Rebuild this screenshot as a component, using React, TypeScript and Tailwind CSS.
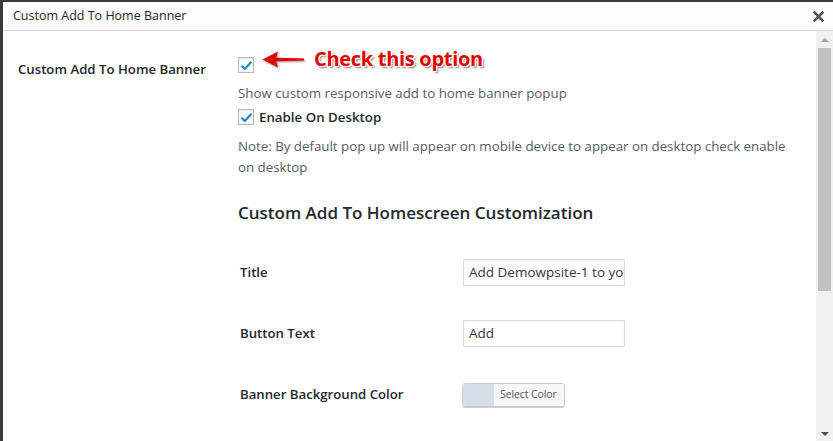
// Custom Add To Home Banner settings modal (WordPress-style admin dialog)

const FONT = "font-['Open_Sans','Noto_Sans',sans-serif]";

function Checkbox() {
    return (
        <span className="flex h-[16px] w-[16px] shrink-0 items-center justify-center border border-[#b4b9be] bg-white shadow-[inset_0_1px_2px_rgba(0,0,0,0.1)]">
            <svg width="13" height="11" viewBox="0 0 13 11" aria-hidden="true">
                <path d="M1.5 5.8 L4.8 9 L11.5 1.8" fill="none" stroke="#1e8cbe" strokeWidth="2.2" strokeLinejoin="round" />
            </svg>
        </span>
    );
}

function Annotation() {
    return (
        <div className="pointer-events-none absolute left-[24px] top-[-10px] flex items-center gap-[8px]">
            <svg width="44" height="20" viewBox="0 0 44 20" className="mt-[2px] [filter:drop-shadow(1px_1px_1px_rgba(0,0,0,0.45))]" aria-hidden="true">
                <path d="M0.5 9.5 L16 1.5 L14 7.8 L42 8.6 L42 10.4 L14 11.2 L16 17.5 Z" fill="#e30000" />
            </svg>
            <span className="whitespace-nowrap text-[20px] font-bold leading-[24px] tracking-[-0.3px] text-[#e30000] [text-shadow:-1px_-1px_0_#fff,1px_-1px_0_#fff,-1px_1px_0_#fff,1px_1px_0_#fff,2px_2px_2px_#777]">
                Check this option
            </span>
        </div>
    );
}

function FieldRow({ label, children }: { label: string; children: React.ReactNode }) {
    return (
        <div className="flex h-[61px] items-center">
            <div className="w-[225px] pl-[2px] text-[13.2px] font-semibold text-[#23282d]">{label}</div>
            {children}
        </div>
    );
}

function TextInput({ value }: { value: string }) {
    return (
        <div className="h-[27px] w-[162px] overflow-hidden whitespace-nowrap border border-[#ddd] bg-white pl-[5px] text-[13.5px] leading-[25px] text-[#32373c] shadow-[inset_0_1px_2px_rgba(0,0,0,0.07)]">
            {value}
        </div>
    );
}

function ColorButton() {
    return (
        <div className="ml-[-1px] flex h-[24px] w-[103px] overflow-hidden rounded-[3px] border border-[#ccc] shadow-[0_1px_0_#ccc]">
            <span className="w-[30px] bg-[#d6dfe8]" />
            <span className="flex flex-1 items-center whitespace-nowrap border-l border-[#ddd] bg-[#f7f7f7] pl-[6px] text-[10.5px] tracking-[-0.1px] text-[#555]">
                Select Color
            </span>
        </div>
    );
}

function Scrollbar() {
    return (
        <div className="flex w-[17px] shrink-0 flex-col items-center bg-[#f0f0f0]">
            <span className="mt-[7px] h-0 w-0 border-x-[4px] border-b-[4px] border-x-transparent border-b-[#a3a3a3]" />
            <span className="mt-[6px] h-[243px] w-[13px] bg-[#c1c1c1]" />
            <span className="mt-auto mb-[5px] h-0 w-0 border-x-[4px] border-t-[4px] border-x-transparent border-t-[#505050]" />
        </div>
    );
}

export default function App() {
    return (
        <div className={`h-[441px] w-[833px] overflow-hidden bg-[#3b3b3b] pl-[3px] pt-[2px] ${FONT}`}>
            <div className="flex h-full flex-col bg-white">
                {/* Header */}
                <div className="flex h-[29px] shrink-0 items-center justify-between border-b border-[#dddddd] bg-[#fcfcfc] pl-[10px] pr-[9px]">
                    <span className="text-[12.5px] text-[#23282d]">Custom Add To Home Banner</span>
                    <svg width="11" height="11" viewBox="0 0 11 11" aria-hidden="true">
                        <path d="M1.5 1.5 L9.5 9.5 M9.5 1.5 L1.5 9.5" stroke="#555" strokeWidth="2.6" strokeLinecap="square" />
                    </svg>
                </div>

                {/* Body */}
                <div className="flex min-h-0 flex-1">
                    <div className="flex flex-1 overflow-hidden pl-[15px] pt-[26px]">
                        <div className="w-[220px] shrink-0 pt-[2px] text-[13.2px] font-semibold leading-[20px] text-[#23282d]">
                            Custom Add To Home Banner
                        </div>
                        <div className="flex-1 pr-[24px]">
                            <div className="relative">
                                <Checkbox />
                                <Annotation />
                            </div>
                            <p className="mt-[10px] text-[13.3px] leading-[20px] text-[#555d66]">
                                Show custom responsive add to home banner popup
                            </p>
                            <label className="mt-[6px] flex items-center gap-[5px] text-[13.3px] font-semibold leading-[16px] text-[#23282d]">
                                <Checkbox />
                                Enable On Desktop
                            </label>
                            <p className="mt-[11px] text-[13.3px] leading-[21px] text-[#555d66]">
                                Note: By default pop up will appear on mobile device to appear on desktop check enable on desktop
                            </p>
                            <h2 className="mt-[23px] text-[17px] font-semibold leading-[24px] text-[#23282d]">
                                Custom Add To Homescreen Customization
                            </h2>
                            <div className="mt-[17px]">
                                <FieldRow label="Title">
                                    <TextInput value="Add Demowpsite-1 to your home screen" />
                                </FieldRow>
                                <FieldRow label="Button Text">
                                    <TextInput value="Add" />
                                </FieldRow>
                                <FieldRow label="Banner Background Color">
                                    <ColorButton />
                                </FieldRow>
                            </div>
                        </div>
                    </div>
                    <Scrollbar />
                </div>
            </div>
        </div>
    );
}
